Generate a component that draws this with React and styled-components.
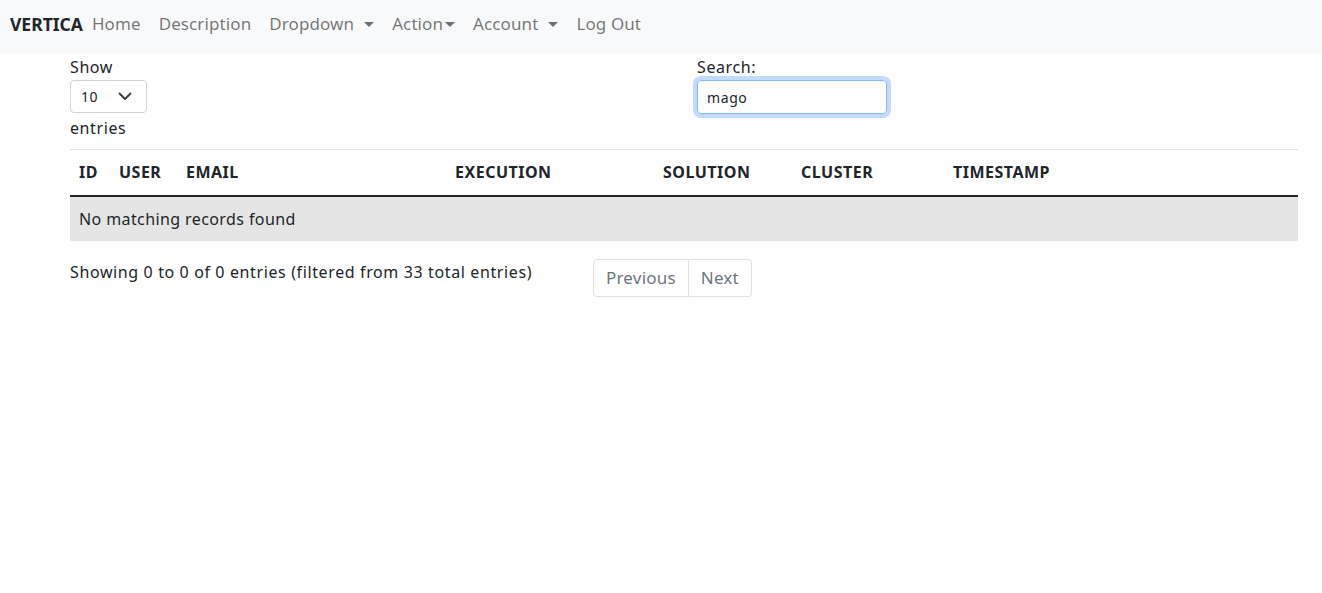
import React from 'react';
import styled, { createGlobalStyle } from 'styled-components';

const GlobalStyle = createGlobalStyle`
  * { box-sizing: border-box; }
  body {
    margin: 0;
    font-family: "Noto Sans", "Open Sans", sans-serif;
    font-size: 16px;
    line-height: 1.5;
    color: #212529;
    background: #fff;
    letter-spacing: 0.6px;
  }
`;

const Navbar = styled.nav`
  height: 54px;
  background: #f8f9fa;
  display: flex;
  align-items: center;
  padding: 0 10px 6px;
`;

const Brand = styled.span`
  font-weight: 700;
  font-size: 17.5px;
  color: #212529;
  margin-right: 9px;
  letter-spacing: 0;
`;

const NavList = styled.ul`
  list-style: none;
  display: flex;
  align-items: center;
  gap: 18px;
  margin: 0;
  padding: 0;
`;

const NavItem = styled.li`
  color: rgba(0, 0, 0, 0.55);
  font-size: 17px;
  letter-spacing: 0.1px;
  display: flex;
  align-items: center;
  gap: ${p => (p.$tight ? '2px' : '10px')};
`;

const Caret = styled.span`
  display: inline-block;
  width: 0;
  height: 0;
  border-top: 5px solid rgba(0, 0, 0, 0.55);
  border-left: 5px solid transparent;
  border-right: 5px solid transparent;
  margin-top: 1px;
`;

const Main = styled.main`
  padding: 0 24px 0 70px;
`;

const TopRow = styled.div`
  display: grid;
  grid-template-columns: 627px 1fr;
  padding-top: 1px;
`;

const Field = styled.div`
  display: flex;
  flex-direction: column;
  align-items: flex-start;
`;

const Label = styled.label`
  display: block;
  line-height: 24px;
`;

const SelectBox = styled.div`
  width: 77px;
  height: 33px;
  border: 1px solid #ced4da;
  border-radius: 4px;
  display: flex;
  align-items: center;
  justify-content: space-between;
  padding: 0 14px 0 10px;
  font-size: 14px;
  margin: 1px 0 3px;
`;

const SearchInput = styled.div`
  width: 190px;
  height: 34px;
  border: 1px solid #86b7fe;
  border-radius: 4px;
  box-shadow: 0 0 0 4px rgba(13, 110, 253, 0.25);
  display: flex;
  align-items: center;
  padding: 0 9px;
  font-size: 14px;
  margin-top: 1px;
`;

const Table = styled.table`
  width: 100%;
  border-collapse: collapse;
  margin-top: 9px;
  border-top: 1px solid #dee2e6;
`;

const Th = styled.th`
  text-align: left;
  font-weight: 700;
  padding: 10px 9px 11px;
  border-bottom: 2px solid #212529;
  letter-spacing: 0.5px;
`;

const Td = styled.td`
  padding: 10px 9px;
  background: #e5e5e5;
  letter-spacing: 0.4px;
`;

const BottomRow = styled.div`
  display: grid;
  grid-template-columns: 523px 1fr;
  padding-top: 18px;
`;

const Info = styled.div`
  line-height: 24px;
  padding-top: 1px;
  letter-spacing: 0.62px;
`;

const Pagination = styled.div`
  display: flex;
`;

const PageButton = styled.span`
  display: block;
  height: 38px;
  line-height: 36px;
  padding: 0 12px;
  border: 1px solid #dee2e6;
  color: #6c757d;
  font-size: 17px;
  letter-spacing: 0.2px;
  background: #fff;
  &:first-child {
    border-radius: 4px 0 0 4px;
  }
  &:last-child {
    border-left: none;
    border-radius: 0 4px 4px 0;
  }
`;

const cols = [
  { name: 'ID', w: 40 },
  { name: 'USER', w: 67 },
  { name: 'EMAIL', w: 269 },
  { name: 'EXECUTION', w: 208 },
  { name: 'SOLUTION', w: 138 },
  { name: 'CLUSTER', w: 152 },
  { name: 'TIMESTAMP' },
];

export default function App() {
  return (
    <>
      <GlobalStyle />
      <Navbar>
        <Brand>VERTICA</Brand>
        <NavList>
          <NavItem>Home</NavItem>
          <NavItem>Description</NavItem>
          <NavItem>Dropdown <Caret /></NavItem>
          <NavItem $tight>Action<Caret /></NavItem>
          <NavItem>Account <Caret /></NavItem>
          <NavItem>Log Out</NavItem>
        </NavList>
      </Navbar>
      <Main>
        <TopRow>
          <Field>
            <Label>Show</Label>
            <SelectBox>
              <span>10</span>
              <svg width="14" height="9" viewBox="0 0 14 9" fill="none">
                <path d="M1.5 1.5 L7 7 L12.5 1.5" stroke="#343a40" strokeWidth="1.8" strokeLinecap="round" strokeLinejoin="round" />
              </svg>
            </SelectBox>
            <Label>entries</Label>
          </Field>
          <Field>
            <Label>Search:</Label>
            <SearchInput>mago</SearchInput>
          </Field>
        </TopRow>
        <Table>
          <colgroup>
            {cols.map(c => <col key={c.name} width={c.w} />)}
          </colgroup>
          <thead>
            <tr>{cols.map(c => <Th key={c.name}>{c.name}</Th>)}</tr>
          </thead>
          <tbody>
            <tr><Td colSpan={7}>No matching records found</Td></tr>
          </tbody>
        </Table>
        <BottomRow>
          <Info>Showing 0 to 0 of 0 entries (filtered from 33 total entries)</Info>
          <Pagination>
            <PageButton>Previous</PageButton>
            <PageButton>Next</PageButton>
          </Pagination>
        </BottomRow>
      </Main>
    </>
  );
}
